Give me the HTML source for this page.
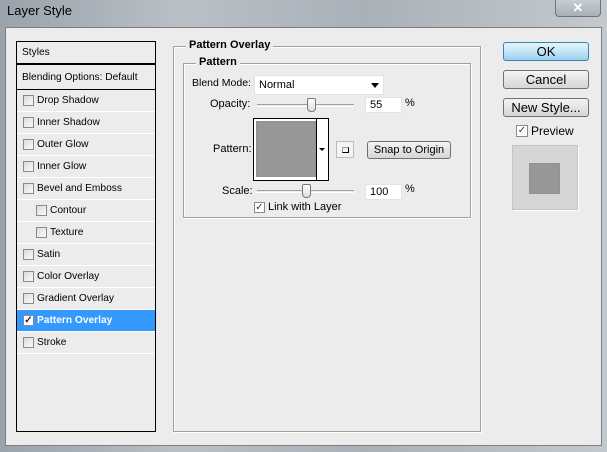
<!DOCTYPE html>
<html><head><style>
*{box-sizing:border-box;margin:0;padding:0}
body{width:607px;height:452px;overflow:hidden;font-family:"Liberation Sans",Arial,sans-serif;font-size:11px;color:#000;position:relative;white-space:nowrap;
background:linear-gradient(90deg,#9aa3ab,#b9c0c6 30%,#a9b1b8 60%,#c3c9cd);}
.abs{position:absolute}
.title{left:7px;top:3px;font-size:13px;color:#000}
.close{left:555px;top:-2px;width:46px;height:19px;border:1px solid #6d7379;border-radius:0 0 4px 4px;background:linear-gradient(#c9cfd4,#a9b0b6);color:#fff;text-align:center;font-weight:bold;font-size:13px;line-height:17px}
.client{left:5px;top:27px;width:597px;height:419px;background:#ececec;border:1px solid #7b7f83}
.list{left:16px;top:41px;width:140px;height:391px;border:1px solid #000;background:#ececec}
.row{position:absolute;left:0;width:138px;height:22px;border-bottom:1px solid #fff;line-height:21px;padding-left:20px;font-size:10.2px}
.cb{position:absolute;left:6px;top:5px;width:11px;height:11px;border:1px solid #8a8a8a;background:linear-gradient(135deg,#dcdcdc,#fafafa)}
.sel{background:#3399ff;color:#fff;font-weight:bold}
.gb{border:1px solid #a0a0a0;box-shadow:inset 1px 1px 0 #fff,1px 1px 0 #fff}
.lg{background:#ececec;font-weight:bold;padding:0 3px}
.btn{border:1px solid #707070;border-radius:3px;background:linear-gradient(#f4f4f4,#e4e4e4 50%,#d6d6d6);text-align:center;font-size:13px}
.slider{height:3px;border-top:1px solid #a0a0a0;border-bottom:1px solid #fff}
.thumb{width:9px;height:14px;border:1px solid #777;border-radius:2px 2px 4px 4px;background:linear-gradient(#fff,#ddd)}
.inp{background:#fff;border:1px solid #e3e3e3;height:16px;padding:1px 4px}
.pat{background:#979797}
</style></head><body>
<div class="abs title">Layer Style</div>
<div class="abs close">✕</div>
<div class="abs client"></div>
<div class="abs list">
 <div class="row" style="top:0;height:23px;padding-left:5px;border-bottom:2px solid #000;line-height:22px">Styles</div>
 <div class="row" style="top:24px;height:24px;padding-left:5px;border-bottom:1px solid #000;line-height:23px;color:#000">Blending Options: Default</div>
 <div class="row" style="top:48px"><span class="cb"></span>Drop Shadow</div>
 <div class="row" style="top:70px"><span class="cb"></span>Inner Shadow</div>
 <div class="row" style="top:92px"><span class="cb"></span>Outer Glow</div>
 <div class="row" style="top:114px"><span class="cb"></span>Inner Glow</div>
 <div class="row" style="top:136px"><span class="cb"></span>Bevel and Emboss</div>
 <div class="row" style="top:158px;padding-left:33px"><span class="cb" style="left:19px"></span>Contour</div>
 <div class="row" style="top:180px;padding-left:33px"><span class="cb" style="left:19px"></span>Texture</div>
 <div class="row" style="top:202px"><span class="cb"></span>Satin</div>
 <div class="row" style="top:224px"><span class="cb"></span>Color Overlay</div>
 <div class="row" style="top:246px"><span class="cb"></span>Gradient Overlay</div>
 <div class="row sel" style="top:268px"><span class="cb" style="background:#fff;color:#224;font-size:10px;line-height:9px;text-align:center">✓</span>Pattern Overlay</div>
 <div class="row" style="top:290px"><span class="cb"></span>Stroke</div>
</div>
<div class="abs gb" style="left:173px;top:46px;width:308px;height:386px"></div>
<div class="abs lg" style="left:186px;top:39px">Pattern Overlay</div>
<div class="abs gb" style="left:183px;top:63px;width:288px;height:155px"></div>
<div class="abs lg" style="left:196px;top:56px">Pattern</div>
<div class="abs" style="left:192px;top:77px;font-size:10.5px">Blend Mode:</div>
<div class="abs inp" style="left:254px;top:75px;width:130px;height:20px;font-size:11px;padding-top:3px">Normal<span style="position:absolute;right:4px;top:7px;border:4px solid transparent;border-top:5px solid #000;border-bottom:0"></span></div>
<div class="abs" style="left:210px;top:98px">Opacity:</div>
<div class="abs slider" style="left:257px;top:104px;width:97px"></div>
<div class="abs thumb" style="left:307px;top:98px"></div>
<div class="abs inp" style="left:365px;top:97px;width:37px">55</div>
<div class="abs" style="left:405px;top:97px">%</div>
<div class="abs" style="left:213px;top:143px">Pattern:</div>
<div class="abs" style="left:253px;top:118px;width:76px;height:63px;border:1px solid #000;background:#fff"></div>
<div class="abs pat" style="left:256px;top:121px;width:60px;height:56px;box-shadow:inset 0 0 2px #888"></div>
<div class="abs" style="left:316px;top:118px;width:1px;height:63px;background:#000"></div>
<div class="abs" style="left:319px;top:148px;border:3px solid transparent;border-top:3px solid #000"></div>
<div class="abs" style="left:336px;top:141px;width:18px;height:17px;border:1px solid #bbb;background:#f4f4f4"><div class="abs" style="left:5px;top:5px;width:7px;height:6px;border:1px solid #000;border-top-color:#999;border-left-color:#999"></div></div>
<div class="abs btn" style="left:367px;top:141px;width:84px;height:18px;line-height:16px;font-size:11px">Snap to Origin</div>
<div class="abs" style="left:222px;top:185px">Scale:</div>
<div class="abs slider" style="left:257px;top:190px;width:97px"></div>
<div class="abs thumb" style="left:302px;top:184px"></div>
<div class="abs inp" style="left:365px;top:184px;width:37px">100</div>
<div class="abs" style="left:405px;top:183px">%</div>
<div class="abs cb" style="left:254px;top:202px;position:absolute;background:#fff;color:#335;font-size:10px;line-height:9px;text-align:center">✓</div>
<div class="abs" style="left:268px;top:201px">Link with Layer</div>
<div class="abs btn" style="left:503px;top:42px;width:86px;height:19px;line-height:17px;border-color:#3c7fb1;background:linear-gradient(#e5f4fc,#c4e5f6 50%,#98d1ef)">OK</div>
<div class="abs btn" style="left:503px;top:70px;width:86px;height:19px;line-height:17px">Cancel</div>
<div class="abs btn" style="left:503px;top:98px;width:86px;height:19px;line-height:17px">New Style...</div>
<div class="abs cb" style="left:516px;top:125px;position:absolute;width:12px;height:12px;background:#fff;color:#335;font-size:10px;line-height:10px;text-align:center">✓</div>
<div class="abs" style="left:531px;top:124px;font-size:12px">Preview</div>
<div class="abs" style="left:512px;top:145px;width:66px;height:65px;background:#d6d6d6;border:1px solid #c4c4c4;box-shadow:1px 1px 0 #fff"></div>
<div class="abs pat" style="left:529px;top:163px;width:31px;height:31px;box-shadow:inset 0 0 1px #777"></div>
</body></html>
